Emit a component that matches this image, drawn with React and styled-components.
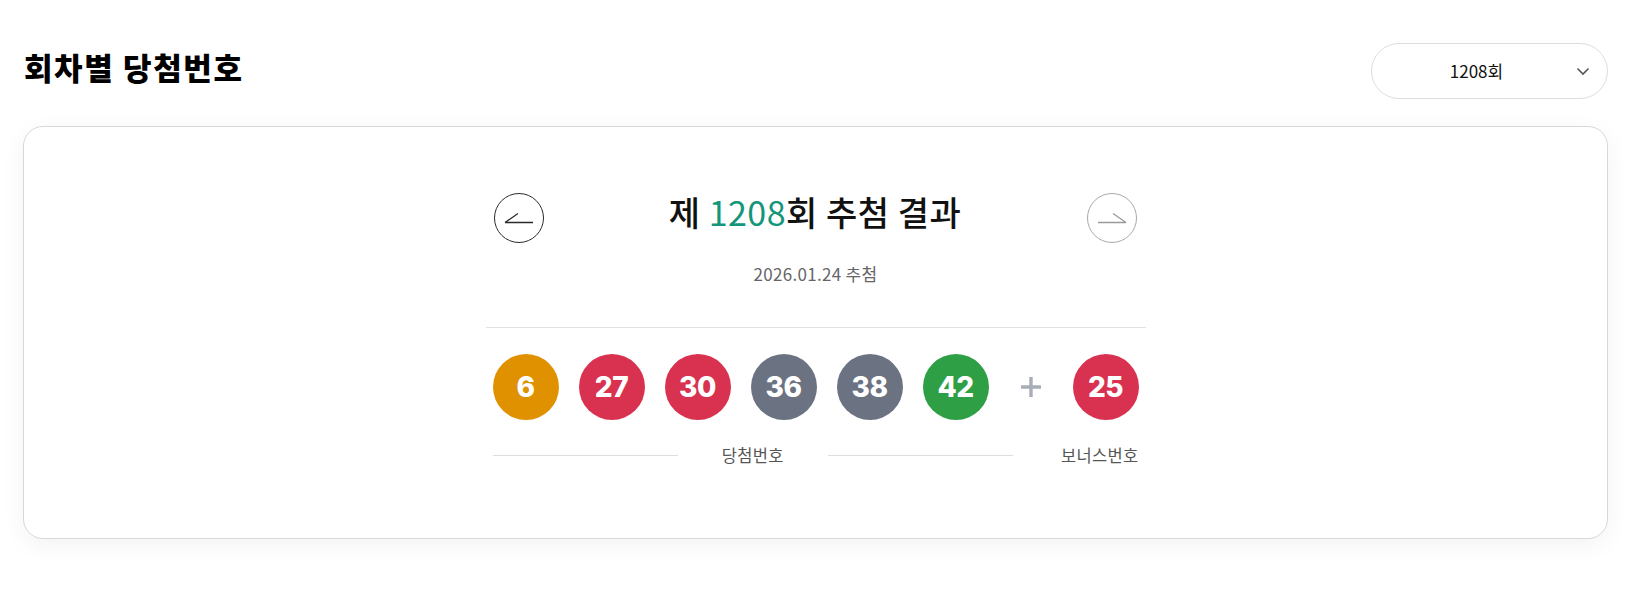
import React from "react";
import styled, { createGlobalStyle } from "styled-components";

const GlobalStyle = createGlobalStyle`
	html, body {
		margin: 0;
		padding: 0;
		background: #fff;
	}
	body {
		font-family: "Noto Sans CJK KR", "Noto Sans", sans-serif;
		color: #111;
	}
	* {
		box-sizing: border-box;
	}
`;

const BALL_COLORS = {
	yellow: "#e09100",
	blue: "#3a7bd5",
	red: "#d93250",
	gray: "#6b7282",
	green: "#2e9f45",
};

const ballColor = (n) => {
	if (n <= 10) return BALL_COLORS.yellow;
	if (n <= 20) return BALL_COLORS.blue;
	if (n <= 30) return BALL_COLORS.red;
	if (n <= 40) return BALL_COLORS.gray;
	return BALL_COLORS.green;
};

const Page = styled.div`
	padding: 43px 23px 40px;
`;

const Header = styled.div`
	display: flex;
	align-items: center;
	justify-content: space-between;
`;

const PageTitle = styled.h2`
	margin: 0 0 10px 1px;
	font-size: 31px;
	font-weight: 900;
	letter-spacing: 1.6px;
	line-height: 1;
	color: #000;
`;

const Select = styled.button`
	position: relative;
	width: 237px;
	height: 56px;
	border: 1px solid #dcdde0;
	border-radius: 28px;
	background: #fff;
	font-family: "Noto Sans CJK KR", "Noto Sans", sans-serif;
	font-size: 17px;
	color: #111;
	display: flex;
	align-items: center;
	justify-content: center;
	padding: 0 26px 2px 0;
	cursor: pointer;

	& svg {
		position: absolute;
		right: 17px;
		top: 23px;
	}
`;

const Card = styled.section`
	margin-top: 27px;
	height: 413px;
	border: 1px solid #d8d8d8;
	border-radius: 20px;
	background: #fff;
	box-shadow: 0 6px 24px rgba(0, 0, 0, 0.05);
	display: flex;
	justify-content: center;
	padding-top: 66px;
`;

const Inner = styled.div`
	width: 646px;
	display: flex;
	flex-direction: column;
	align-items: stretch;
`;

const TitleRow = styled.div`
	height: 50px;
	display: flex;
	align-items: center;
	justify-content: space-between;
	padding: 0 2px 0 1px;
`;

const ArrowButton = styled.button`
	width: 50px;
	height: 50px;
	border-radius: 50%;
	border: 1px solid ${(p) => (p.$disabled ? "#a9a9a9" : "#2a2a2a")};
	background: #fff;
	display: flex;
	align-items: center;
	justify-content: center;
	padding: 0;
	cursor: pointer;
`;

const DrawTitle = styled.h3`
	margin: 0 0 12px;
	font-size: 34px;
	font-weight: 500;
	letter-spacing: 0.5px;
	line-height: 40px;
	color: #111;

	& em {
		font-style: normal;
		color: #14967a;
		font-weight: 400;
	}
`;

const DrawDate = styled.p`
	margin: 19px 0 0;
	text-align: center;
	font-size: 17px;
	letter-spacing: 0.3px;
	color: #666;
	line-height: 24px;
`;

const Divider = styled.hr`
	margin: 41px -7px 0;
	border: 0;
	border-top: 1px solid #e2e2e2;
`;

const BallRow = styled.div`
	margin-top: 26px;
	display: flex;
	align-items: center;
	gap: 20px;
`;

const Ball = styled.span`
	width: 66px;
	height: 66px;
	border-radius: 50%;
	background: ${(p) => p.$color};
	color: #fff;
	display: flex;
	align-items: center;
	justify-content: center;
	font-family: Inter, "Noto Sans", sans-serif;
	font-size: 28px;
	font-weight: 800;
	letter-spacing: -0.5px;
`;

const Plus = styled.span`
	width: 44px;
	display: flex;
	justify-content: center;
`;

const LabelRow = styled.div`
	margin-top: 24px;
	display: flex;
	align-items: center;
	gap: 48px;
`;

const MainLabel = styled.div`
	flex: 1;
	display: flex;
	align-items: center;
	gap: 44px;

	&::before,
	&::after {
		content: "";
		flex: 1;
		border-top: 1px solid #dedede;
	}
`;

const Label = styled.span`
	font-size: 16.5px;
	letter-spacing: 0.3px;
	color: #555;
	line-height: 22px;
	white-space: nowrap;
`;

const numbers = [6, 27, 30, 36, 38, 42];
const bonus = 25;

const Chevron = () => (
	<svg width="14" height="9" viewBox="0 0 14 9" fill="none">
		<path d="M1.5 1.5 7 7l5.5-5.5" stroke="#555" strokeWidth="1.6" />
	</svg>
);

const PrevIcon = () => (
	<svg width="32" height="14" viewBox="0 0 32 14" fill="none">
		<path d="M2 11.5h28M2 11.5 15 2.5" stroke="#2a2a2a" strokeWidth="1.3" />
	</svg>
);

const NextIcon = () => (
	<svg width="32" height="14" viewBox="0 0 32 14" fill="none">
		<path d="M2 11.5h28M30 11.5 17 2.5" stroke="#9a9a9a" strokeWidth="1.3" />
	</svg>
);

export default function App() {
	return (
		<Page>
			<GlobalStyle />
			<Header>
				<PageTitle>회차별 당첨번호</PageTitle>
				<Select>
					1208회
					<Chevron />
				</Select>
			</Header>
			<Card>
				<Inner>
					<TitleRow>
						<ArrowButton aria-label="이전 회차">
							<PrevIcon />
						</ArrowButton>
						<DrawTitle>
							제 <em>1208</em>회 추첨 결과
						</DrawTitle>
						<ArrowButton $disabled aria-label="다음 회차">
							<NextIcon />
						</ArrowButton>
					</TitleRow>
					<DrawDate>2026.01.24 추첨</DrawDate>
					<Divider />
					<BallRow>
						{numbers.map((n) => (
							<Ball key={n} $color={ballColor(n)}>
								{n}
							</Ball>
						))}
						<Plus>
							<svg width="22" height="22" viewBox="0 0 22 22">
								<path d="M11 1v20M1 11h20" stroke="#a9adb8" strokeWidth="3.4" />
							</svg>
						</Plus>
						<Ball $color={ballColor(bonus)}>{bonus}</Ball>
					</BallRow>
					<LabelRow>
						<MainLabel>
							<Label>당첨번호</Label>
						</MainLabel>
						<Label>보너스번호</Label>
					</LabelRow>
				</Inner>
			</Card>
		</Page>
	);
}
